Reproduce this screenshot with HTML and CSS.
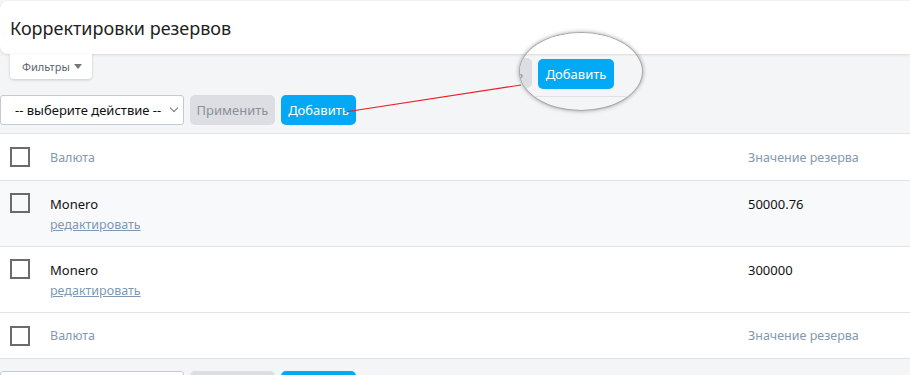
FILE: index.html
```html
<!DOCTYPE html>
<html lang="ru">
<head>
<meta charset="UTF-8" />
<title>Корректировки резервов</title>
<link rel="stylesheet" href="styles.css">
</head>
<body>
<div class="header">
    <h1>Корректировки резервов</h1>
</div>
<div class="filters">Фильтры <span class="caret"></span></div>

<div class="toolbar">
    <div class="select">-- выберите действие -- <span class="chev"></span></div>
    <button class="btn btn-apply">Применить</button>
    <button class="btn btn-add">Добавить</button>
</div>

<table class="grid">
    <tr class="head">
        <td class="check"><div class="box"></div></td>
        <td>Валюта</td>
        <td class="val">Значение резерва</td>
    </tr>
    <tr class="item odd">
        <td class="check"><div class="box"></div></td>
        <td><div class="name">Monero</div><a class="edit" href="#">редактировать</a></td>
        <td class="val">50000.76</td>
    </tr>
    <tr class="item">
        <td class="check"><div class="box"></div></td>
        <td><div class="name">Monero</div><a class="edit" href="#">редактировать</a></td>
        <td class="val">300000</td>
    </tr>
    <tr class="head foot">
        <td class="check"><div class="box"></div></td>
        <td>Валюта</td>
        <td class="val">Значение резерва</td>
    </tr>
</table>

<div class="toolbar bottom">
    <div class="select">-- выберите действие -- <span class="chev"></span></div>
    <button class="btn btn-apply">Применить</button>
    <button class="btn btn-add">Добавить</button>
</div>

<!-- annotation -->
<svg class="pointer" width="910" height="375">
    <line x1="345" y1="112" x2="521" y2="85" stroke="#ee1c25" stroke-width="1.2" />
</svg>
<div class="lens">
    <div class="lens-top"></div>
    <div class="lens-line"></div>
    <div class="lens-apply">ь</div>
    <div class="lens-add">Добавить</div>
</div>
</body>
</html>
```
FILE: styles.css
```css
* {
box-sizing: border-box;
}
body {
margin: 0;
background-color: #f4f5f7;
font-family: 'Noto Sans', 'Open Sans', sans-serif;
color: #222;
position: relative;
height: 375px;
overflow: hidden;
}
.header {
margin-top: 1px;
height: 53px;
background: #fff;
border-radius: 8px 0 0 8px;
box-shadow: 0 1px 3px rgba(0, 0, 0, 0.12);
display: flex;
align-items: center;
padding-left: 10px;
}
.header h1 {
margin: 0;
font-size: 18px;
font-weight: 400;
color: #222;
}
.filters {
margin-left: 10px;
width: 82px;
height: 25px;
background: #fff;
border-radius: 0 0 4px 4px;
box-shadow: 0 1px 3px rgba(0, 0, 0, 0.18);
font-size: 11px;
color: #5c6470;
display: flex;
align-items: center;
padding-left: 12px;
gap: 4px;
}
.caret {
width: 0;
height: 0;
border-left: 4px solid transparent;
border-right: 4px solid transparent;
border-top: 5px solid #777;
}
.toolbar {
display: flex;
gap: 6px;
margin-top: 16px;
height: 30px;
}
.toolbar.bottom {
margin-top: 12px;
}
.select {
width: 184px;
height: 30px;
background: #fff;
border: 1px solid #c3cad3;
border-radius: 3px;
font-size: 13px;
color: #111;
display: flex;
align-items: center;
padding-left: 14px;
position: relative;
}
.chev {
position: absolute;
right: 6px;
top: 9px;
width: 6px;
height: 6px;
border-right: 1.3px solid #777;
border-bottom: 1.3px solid #777;
transform: rotate(45deg);
}
.btn {
border: 0;
height: 30px;
border-radius: 5px;
font-family: inherit;
font-size: 13px;
padding: 0;
}
.btn-apply {
width: 85px;
background: #dcdee3;
color: #8b9099;
}
.btn-add {
width: 75px;
background: #03a9f4;
color: #fff;
}
.grid {
margin-top: 8px;
width: 100%;
border-collapse: collapse;
background: #fff;
font-size: 13px;
}
.grid td {
border-top: 1px solid #dfe3e8;
padding: 0;
vertical-align: top;
}
.grid .check {
width: 50px;
padding-left: 10px;
}
.grid .val {
width: 162px;
}
.head td {
height: 47px;
color: #8399ad;
font-size: 12.5px;
vertical-align: middle;
}
.foot td {
border-bottom: 1px solid #dfe3e8;
height: 46px;
}
.box {
width: 20px;
height: 20px;
border: 2px solid #6b6b6b;
}
.item td {
height: 66px;
padding-top: 12px;
}
.item.odd {
background: #f8f9fb;
}
.item .check {
padding-top: 12px;
}
.item .val {
padding-top: 14px;
color: #111;
}
.name {
color: #111;
margin-top: 2px;
line-height: 18px;
}
.edit {
display: block;
margin-top: 3px;
color: #7d98b3;
font-size: 12.5px;
text-decoration: underline;
}
.pointer {
position: absolute;
left: 0;
top: 0;
pointer-events: none;
}
.lens {
position: absolute;
left: 519px;
top: 32px;
width: 124px;
height: 79px;
border-radius: 50%;
border: 1.5px solid #a8a8a8;
box-shadow: 0 0 4px rgba(0, 0, 0, 0.35);
background: #f4f5f7;
overflow: hidden;
}
.lens-top {
position: absolute;
left: 0;
top: 0;
width: 100%;
height: 21px;
background: #fff;
box-shadow: 0 1px 2px rgba(0, 0, 0, 0.1);
}
.lens-line {
position: absolute;
left: 0;
top: 63px;
width: 100%;
height: 1px;
background: #dfe3e8;
}
.lens-apply {
position: absolute;
left: -4px;
top: 25px;
width: 16px;
height: 30px;
background: #dcdee3;
border-radius: 0 5px 5px 0;
font-size: 13px;
color: #8b9099;
line-height: 30px;
text-align: left;
}
.lens-add {
position: absolute;
left: 18px;
top: 26px;
width: 76px;
height: 30px;
background: #03a9f4;
color: #fff;
border-radius: 5px;
font-size: 13px;
line-height: 30px;
text-align: center;
}
```
